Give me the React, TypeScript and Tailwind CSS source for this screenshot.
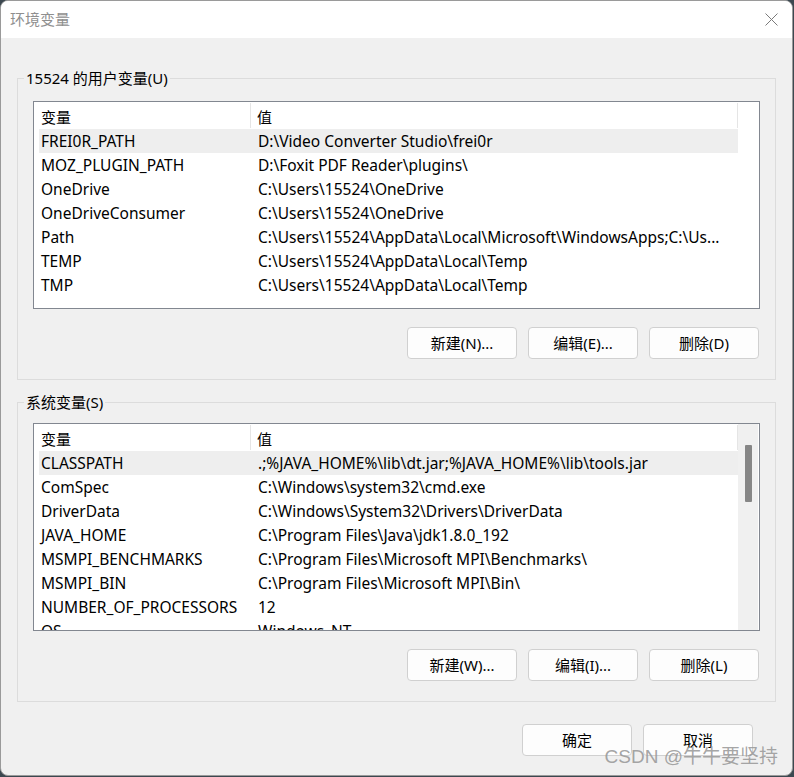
import React from "react";

type EnvRow = { name: string; value: string };

const userVars: EnvRow[] = [
  { name: "FREI0R_PATH", value: "D:\\Video Converter Studio\\frei0r" },
  { name: "MOZ_PLUGIN_PATH", value: "D:\\Foxit PDF Reader\\plugins\\" },
  { name: "OneDrive", value: "C:\\Users\\15524\\OneDrive" },
  { name: "OneDriveConsumer", value: "C:\\Users\\15524\\OneDrive" },
  { name: "Path", value: "C:\\Users\\15524\\AppData\\Local\\Microsoft\\WindowsApps;C:\\Us..." },
  { name: "TEMP", value: "C:\\Users\\15524\\AppData\\Local\\Temp" },
  { name: "TMP", value: "C:\\Users\\15524\\AppData\\Local\\Temp" },
];

const systemVars: EnvRow[] = [
  { name: "CLASSPATH", value: ".;%JAVA_HOME%\\lib\\dt.jar;%JAVA_HOME%\\lib\\tools.jar" },
  { name: "ComSpec", value: "C:\\Windows\\system32\\cmd.exe" },
  { name: "DriverData", value: "C:\\Windows\\System32\\Drivers\\DriverData" },
  { name: "JAVA_HOME", value: "C:\\Program Files\\Java\\jdk1.8.0_192" },
  { name: "MSMPI_BENCHMARKS", value: "C:\\Program Files\\Microsoft MPI\\Benchmarks\\" },
  { name: "MSMPI_BIN", value: "C:\\Program Files\\Microsoft MPI\\Bin\\" },
  { name: "NUMBER_OF_PROCESSORS", value: "12" },
  { name: "OS", value: "Windows_NT" },
];

function WinButton({ children }: { children: React.ReactNode }) {
  return (
    <button className="w-[110px] h-[32px] rounded-[4px] border border-[#d0d0d0] bg-[#fdfdfd] text-[15px] text-black flex items-center justify-center">
      {children}
    </button>
  );
}

function EnvList({ rows, scrollbar }: { rows: EnvRow[]; scrollbar?: boolean }) {
  return (
    <div className="h-[208px] border border-[#828790] bg-white flex overflow-hidden">
      <div className="w-[704px] flex flex-col">
        <div className="h-[27px] flex shrink-0 text-[15px]">
          <div className="w-[217px] pl-[7px] pt-[3px] flex items-center border-r border-[#e5e5e5] my-[1px]">变量</div>
          <div className="flex-1 pl-[6px] pt-[3px] flex items-center border-r border-[#e5e5e5] my-[1px]">值</div>
        </div>
        {rows.map((row, i) => (
          <div
            key={row.name}
            className={
              "h-[24px] ml-[5px] pt-[2px] flex items-center shrink-0 text-[15.5px] " +
              (i === 0 ? "bg-[#eeeeee]" : "")
            }
          >
            <div className="w-[212px] pl-[2px] whitespace-nowrap">{row.name}</div>
            <div className="flex-1 pl-[7px] whitespace-nowrap overflow-hidden">{row.value}</div>
          </div>
        ))}
      </div>
      {scrollbar ? (
        <div className="flex-1 bg-[#f0f0f0] mr-[1px] flex justify-center pt-[21px]">
          <div className="w-[7px] h-[57px] bg-[#868686] rounded-[1px] ml-[1px]" />
        </div>
      ) : (
        <div className="flex-1" />
      )}
    </div>
  );
}

function GroupBox({ label, children }: { label: string; children: React.ReactNode }) {
  return (
    <fieldset className="border border-[#dcdcdc] p-0">
      <legend className="ml-[6px] px-[2px] text-[15px] leading-[20px]">{label}</legend>
      <div className="px-[15px] pb-[20px]">{children}</div>
    </fieldset>
  );
}

export default function App() {
  return (
    <div className="w-[794px] h-[777px] bg-[#3c4850] relative overflow-hidden font-['Segoe_UI','Noto_Sans','Noto_Sans_CJK_SC',sans-serif] text-black">
      <div className="w-[793px] h-[776px] rounded-[8px] border border-[#9a9a9a] overflow-hidden flex flex-col bg-[#f0f0f0]">
        <div className="h-[37px] bg-white flex items-center justify-between pl-[9px] pr-[14px] shrink-0">
          <span className="text-[15px] text-[#8f8f8f]">环境变量</span>
          <svg width="13" height="13" viewBox="0 0 13 13">
            <path d="M0.5 0.5 L12.5 12.5 M12.5 0.5 L0.5 12.5" stroke="#7a7a7a" strokeWidth="1" />
          </svg>
        </div>

        <div className="flex-1 px-[16px] pt-[30px] flex flex-col">
          <GroupBox label="15524 的用户变量(U)">
            <div className="pt-[13px]">
              <EnvList rows={userVars} />
            </div>
            <div className="flex justify-end gap-[11px] mt-[18px] pr-[1px]">
              <WinButton>新建(N)...</WinButton>
              <WinButton>编辑(E)...</WinButton>
              <WinButton>删除(D)</WinButton>
            </div>
          </GroupBox>

          <div className="h-[12px]" />

          <GroupBox label="系统变量(S)">
            <div className="pt-[11px]">
              <EnvList rows={systemVars} scrollbar />
            </div>
            <div className="flex justify-end gap-[11px] mt-[18px] pr-[1px]">
              <WinButton>新建(W)...</WinButton>
              <WinButton>编辑(I)...</WinButton>
              <WinButton>删除(L)</WinButton>
            </div>
          </GroupBox>

          <div className="flex justify-end gap-[11px] mt-[22px] pr-[23px]">
            <WinButton>确定</WinButton>
            <WinButton>取消</WinButton>
          </div>
        </div>
      </div>

      <div className="absolute right-[16px] bottom-[6px] text-[19px] text-[#9a9a9a]/90 font-['Liberation_Sans','Noto_Sans_CJK_SC',sans-serif]">
        CSDN @牛牛要坚持
      </div>
    </div>
  );
}
